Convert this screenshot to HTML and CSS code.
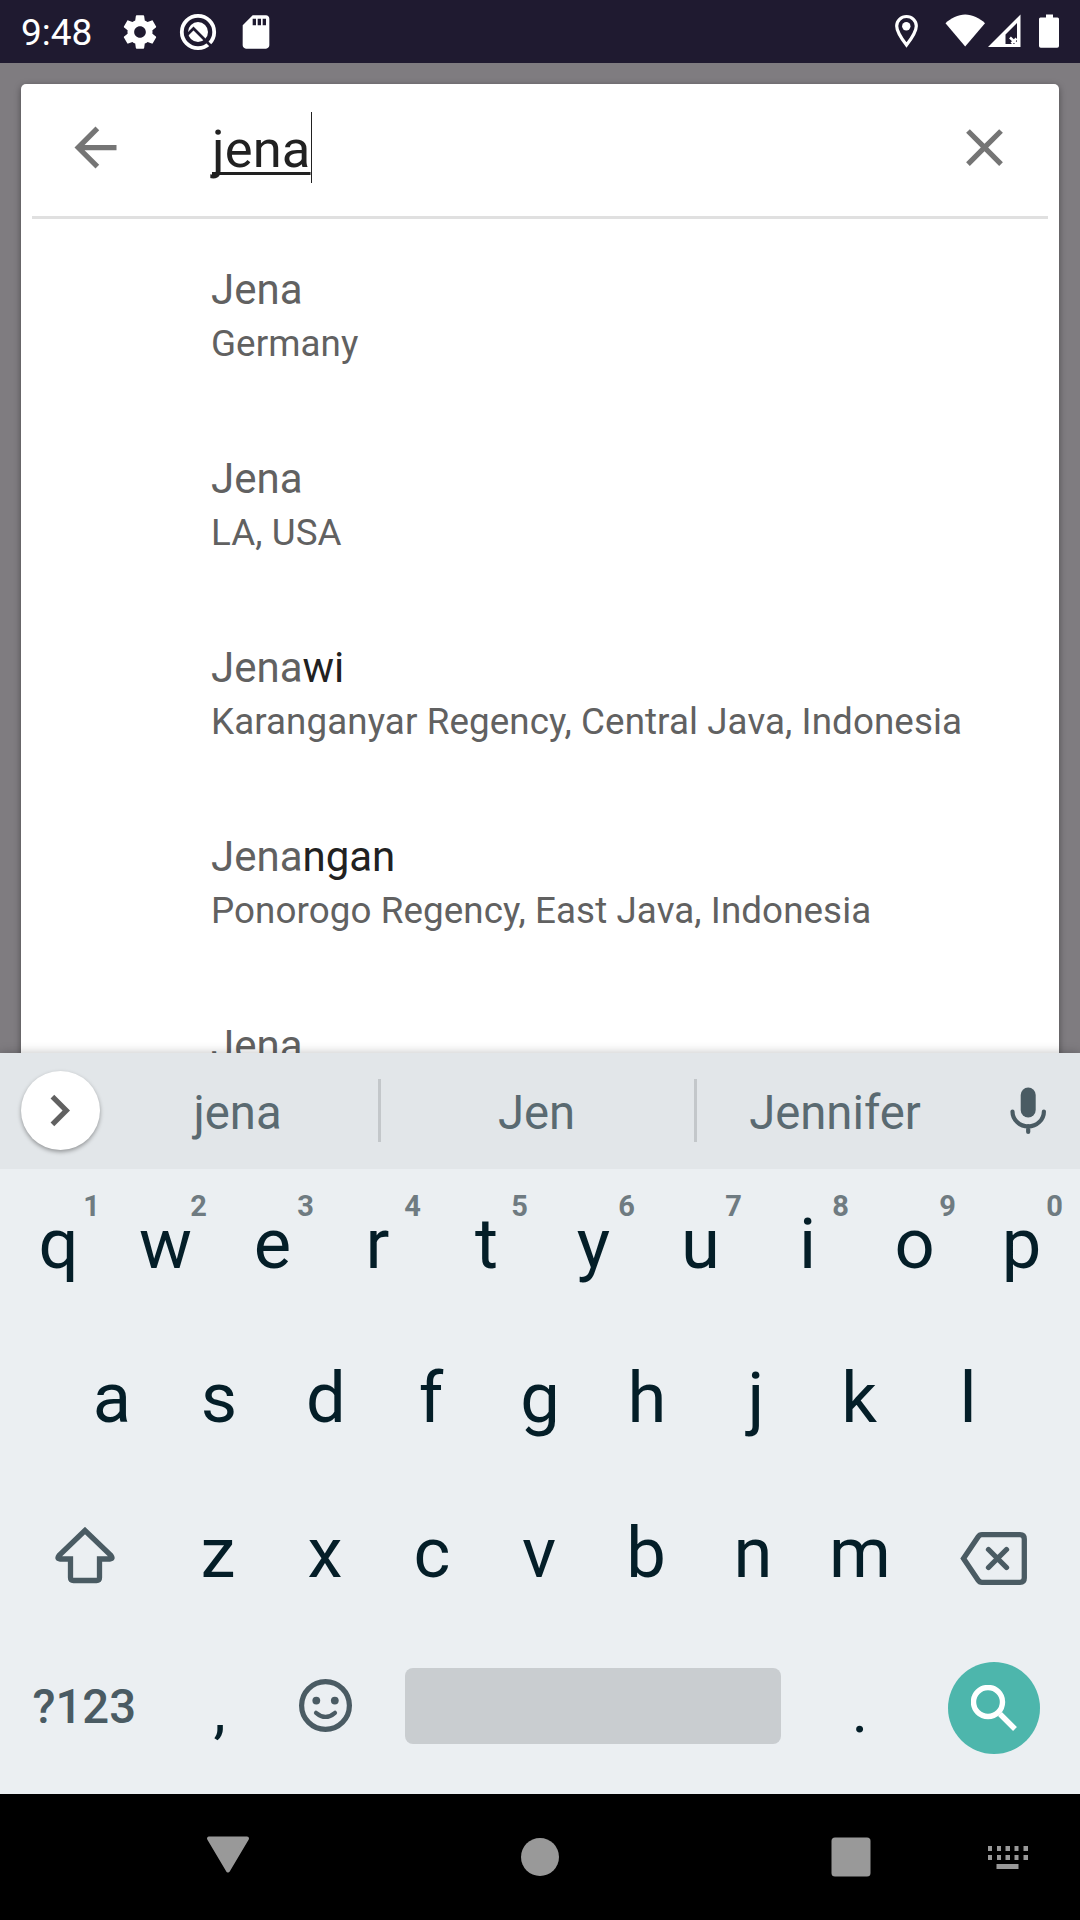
FILE: index.html
```
<!DOCTYPE html>
<html lang="en">
<head>
<meta charset="utf-8">
<title>Place search</title>
<link rel="stylesheet" href="styles.css">
</head>
<body>
<div class="screen">
  <header class="status">
    <span class="clock">9:48</span>
    <svg class="status-icon gear" viewBox="0 0 24 24"><path d="M19.43 12.98c.04-.32.07-.64.07-.98s-.03-.66-.07-.98l2.11-1.65c.19-.15.24-.42.12-.64l-2-3.46c-.12-.22-.39-.3-.61-.22l-2.49 1c-.52-.4-1.08-.73-1.69-.98l-.38-2.65C14.46 2.18 14.25 2 14 2h-4c-.25 0-.46.18-.49.42l-.38 2.65c-.61.25-1.17.59-1.69.98l-2.49-1c-.23-.09-.49 0-.61.22l-2 3.46c-.13.22-.07.49.12.64l2.11 1.65c-.04.32-.07.65-.07.98s.03.66.07.98l-2.11 1.65c-.19.15-.24.42-.12.64l2 3.46c.12.22.39.3.61.22l2.49-1c.52.4 1.08.73 1.69.98l.38 2.65c.03.24.24.42.49.42h4c.25 0 .46-.18.49-.42l.38-2.65c.61-.25 1.17-.59 1.69-.98l2.49 1c.23.09.49 0 .61-.22l2-3.46c.12-.22.07-.49-.12-.64l-2.11-1.65zM12 15.5c-1.93 0-3.5-1.57-3.5-3.5s1.57-3.5 3.5-3.5 3.5 1.57 3.5 3.5-1.57 3.5-3.5 3.5z"/></svg>
    <svg class="status-icon" viewBox="0 0 40 40"><circle cx="20" cy="20" r="16.2" fill="none" stroke="#fff" stroke-width="3.8"/><circle cx="20" cy="20" r="10"/><path d="M9 23L15.500 16.500L33 34" fill="none" stroke="#1f1a30" stroke-width="2.7"/></svg>
    <svg class="status-icon" viewBox="0 0 24 24"><path d="M18 2h-8L4.020 8 4 20c0 1.100.9 2 2 2h12c1.100 0 2-.9 2-2V4c0-1.100-.9-2-2-2zm-6 6h-2V4h2v4zm3 0h-2V4h2v4zm3 0h-2V4h2v4z"/></svg>
    <svg class="status-right" viewBox="0 0 166 35"><path d="M12.500 2.500c-5.500 0-9.800 4.300-9.800 9.600 0 6.500 9.800 19 9.800 19s9.800-12.500 9.800-19c0-5.300-4.300-9.600-9.800-9.600z" fill="none" stroke="#fff" stroke-width="3.200"/><circle cx="12.300" cy="12.300" r="4.200"/><path d="M71.200 32.500L51.500 9.200C57 4 64 .5 71.200.5S85.500 4 91 9.200z"/><path fill-rule="evenodd" d="M94 33L126.500.5V33zM111.500 20.500V30H123V9z"/><path d="M116 23.500l7 6.500M122.500 24.500l-5 5" fill="none" stroke="#fff" stroke-width="2.600"/><path d="M152 .5h7v3h4.500q1.500 0 1.500 1.500v27q0 1.800-1.800 1.800h-16.400q-1.800 0-1.800-1.800V5q0-1.500 1.500-1.500H152z"/></svg>
  </header>

  <main class="backdrop">
    <section class="card">
      <div class="search">
        <svg class="icon" viewBox="0 0 24 24"><path d="M20 11H7.830l5.590-5.590L12 4l-8 8 8 8 1.410-1.410L7.830 13H20v-2z"/></svg>
        <div class="query"><span class="typed">jena</span></div>
        <svg class="icon" viewBox="0 0 24 24"><path d="M19 6.410L17.590 5 12 10.590 6.410 5 5 6.410 10.590 12 5 17.590 6.410 19 12 13.410 17.590 19 19 17.590 13.410 12z"/></svg>
      </div>
      <ul class="results">
        <li><p class="name">Jena</p><p class="region">Germany</p></li>
        <li><p class="name">Jena</p><p class="region">LA, USA</p></li>
        <li><p class="name">Jena<b>wi</b></p><p class="region">Karanganyar Regency, Central Java, Indonesia</p></li>
        <li><p class="name">Jena<b>ngan</b></p><p class="region">Ponorogo Regency, East Java, Indonesia</p></li>
        <li><p class="name">Jena</p></li>
      </ul>
    </section>
  </main>

  <section class="keyboard">
    <div class="suggestions">
      <div class="expand"><svg viewBox="0 0 24 24"><path d="M10 6L8.590 7.410 13.170 12l-4.580 4.590L10 18l6-6z"/></svg></div>
      <div class="word first"><span>jena</span></div>
      <div class="word second"><span>Jen</span></div>
      <div class="word third"><span>Jennifer</span></div>
      <svg class="mic" viewBox="0 0 36 48"><rect x="10.700" y="0.500" width="15" height="30" rx="7.500"/><path d="M2.500 24.500a15.700 15 0 0 0 31.400 0M18.200 39v6" fill="none" stroke="#4a5b63" stroke-width="4.200" stroke-linecap="round"/></svg>
    </div>
    <div class="keys">
      <div class="row">
        <div class="key">q<sup>1</sup></div><div class="key">w<sup>2</sup></div><div class="key">e<sup>3</sup></div><div class="key narrow">r<sup>4</sup></div><div class="key">t<sup>5</sup></div><div class="key">y<sup>6</sup></div><div class="key">u<sup>7</sup></div><div class="key">i<sup>8</sup></div><div class="key">o<sup>9</sup></div><div class="key">p<sup>0</sup></div>
      </div>
      <div class="row">
        <div class="key">a</div><div class="key">s</div><div class="key">d</div><div class="key narrow">f</div><div class="key">g</div><div class="key">h</div><div class="key hook">j</div><div class="key narrow">k</div><div class="key">l</div>
      </div>
      <div class="row lower">
        <div class="key wide"><svg class="shift" viewBox="0 0 60 57"><path d="M30 3.500L4 28.500Q1.500 32 5 32H15.500V50.500Q15.500 53.500 18.500 53.500H41.500Q44.500 53.500 44.500 50.500V32H55Q58.500 32 56 28.500Z"/></svg></div>
        <div class="key">z</div><div class="key">x</div><div class="key">c</div><div class="key">v</div><div class="key">b</div><div class="key">n</div><div class="key">m</div>
        <div class="key wide"><svg class="delete" viewBox="0 0 67 53"><path d="M22 2.700H60Q64.300 2.700 64.300 7V46Q64.300 50.300 60 50.300H22Q19.500 50.300 18 48L3.500 26.500L18 5Q19.500 2.700 22 2.700Z"/><path d="M28.500 17.500L46.500 35.500M46.500 17.500L28.500 35.500"/></svg></div>
      </div>
      <div class="row lower">
        <div class="key wide mode">?123</div>
        <div class="key mark comma">,</div>
        <div class="key"><svg class="emoji" viewBox="0 0 53 53"><circle class="line" cx="26.500" cy="26.500" r="23.900"/><circle cx="17.300" cy="21.600" r="3.900"/><circle cx="35.800" cy="21.600" r="3.900"/><path class="line mouth" d="M17 33.800Q26.500 42 36 33.800"/></svg></div>
        <div class="key space"><i></i></div>
        <div class="key mark">.</div>
        <div class="key wide"><div class="go"><svg viewBox="0 0 46 46"><circle cx="17" cy="17" r="14.500"/><path d="M29 29L44 44"/></svg></div></div>
      </div>
    </div>
  </section>

  <nav class="nav">
    <svg viewBox="0 0 1080 126"><path d="M209 44.500h38L228 76.500z" stroke="#999" stroke-width="4" stroke-linejoin="round"/><circle cx="540" cy="63" r="19"/><rect x="831.500" y="43.500" width="39" height="39" rx="3.500"/><path d="M988 52h4v5h-4zm9 0h4v5h-4zm8.500 0h4.500v5h-4.500zm9 0h4v5h-4zm9 0h4.500v5h-4.500zM988 61h4v5h-4zm9 0h4v5h-4zm8.500 0h4.500v5h-4.500zm9 0h4v5h-4zm9 0h4.500v5h-4.500zM996.500 70h22v5h-22z"/></svg>
  </nav>
</div>
</body>
</html>
```
FILE: styles.css
```
* { box-sizing: border-box; margin: 0; padding: 0; }
body { width: 1080px; height: 1920px; overflow: hidden; font-family: Roboto, sans-serif; }
svg { display: block; flex: none; }
.screen { display: flex; flex-direction: column; height: 1920px; }

.status { height: 63px; flex: none; background: #1f1a30; color: #fff; fill: #fff; display: flex; align-items: center; padding-left: 21px; }
.clock { font-size: 37px; line-height: 44px; width: 99px; padding-top: 2px; }
.status-icon { width: 40px; height: 40px; margin-right: 18px; }
.status-right { width: 166px; height: 35px; margin-left: 600px; }

.backdrop { height: 990px; flex: none; background: #7f7c80; padding: 21px 21px 0; overflow: hidden; }
.card { background: #fff; height: 1100px; border-radius: 5px; box-shadow: 0 2px 7px rgba(0,0,0,.4); }
.search { height: 135px; margin: 0 11px; border-bottom: 3px solid #e0e0e0; display: flex; align-items: center; padding: 0 32px 5px; }
.icon { width: 63px; height: 63px; fill: #757575; }
.query { flex: 1; padding-left: 85px; height: 71px; display: flex; }
.typed { font-size: 52.5px; letter-spacing: .15px; line-height: 71px; color: #212121; border-right: 1px solid #212121; height: 71px; padding-top: 2px; text-decoration: underline; text-decoration-thickness: 3px; text-underline-offset: 5px; text-decoration-skip-ink: none; }
.results { list-style: none; }
.results li { height: 189px; padding: 45px 0 0 190px; white-space: nowrap; }
.name { font-size: 42px; line-height: 52px; color: #616161; }
.name b { font-weight: 400; color: #212121; }
.region { font-size: 36.75px; letter-spacing: .085px; line-height: 46px; margin-top: 5px; color: #616161; }

.keyboard { height: 741px; flex: none; background: #ebeff2; position: relative; box-shadow: 0 0 10px rgba(0,0,0,.25); }
.suggestions { height: 116px; background: #e2e6e9; display: flex; align-items: center; padding: 0 0 1px 21px; color: #5a6a71; }
.expand { width: 79px; height: 79px; border-radius: 50%; background: #fff; box-shadow: 0 2px 4px rgba(0,0,0,.35); display: flex; align-items: center; justify-content: center; }
.expand svg { width: 63px; height: 63px; fill: #616161; margin: -1px 2px 0 0; }
.word { font-size: 47.25px; line-height: 63px; height: 63px; display: flex; justify-content: center; }
.word span { padding-top: 3px; }
.first { width: 281px; padding-right: 3px; border-right: 3px solid #c3c7ca; }
.second { width: 316px; padding-right: 2px; border-right: 3px solid #c3c7ca; }
.third { width: 277px; padding-right: 1px; }
.mic { width: 36px; height: 48px; margin: 0 0 0 36px; fill: #4a5b63; }

.row { display: flex; justify-content: center; height: 154.5px; }
.lower { padding-right: 2px; }
.key { width: 107px; display: flex; align-items: center; justify-content: center; font-size: 70.5px; line-height: 82px; color: #041e28; padding-bottom: 5px; position: relative; }
.key sup { position: absolute; right: 0; top: 20px; width: 41px; text-align: center; font-size: 29px; line-height: 34px; font-weight: 700; color: #6f7b81; }
.narrow { padding-right: 4px; }
.hook { padding-left: 4px; }
.wide { width: 160.5px; }
.mode { font-size: 47.25px; font-weight: 500; color: #4a5b63; padding-bottom: 6px; }
.mark { font-size: 62px; padding: 2px 0 0; }
.comma { padding-left: 3px; }
.shift { width: 60px; height: 57px; fill: none; stroke: #4a5b63; stroke-width: 5.3px; margin: 5px 0 0 1px; }
.delete { width: 67px; height: 53px; fill: none; stroke: #4a5b63; stroke-width: 5.3px; stroke-linecap: round; margin: 12px 0 0 -1px; }
.emoji { width: 53px; height: 53px; fill: #4a5b63; margin-top: -4px; }
.line { fill: none; stroke: #4a5b63; stroke-width: 5.2px; }
.mouth { stroke-width: 4.2px; stroke-linecap: round; }
.space { width: 428px; }
.space i { width: 376px; height: 76px; border-radius: 8px; background: #c9cdd0; margin-top: -3px; }
.go { width: 92px; height: 92px; border-radius: 50%; background: #4db6ac; display: flex; align-items: center; justify-content: center; margin-top: 1px; }
.go svg { width: 46px; height: 46px; fill: none; stroke: #fff; stroke-width: 5.4px; }

.nav { height: 126px; background: #000; fill: #999; }
.nav svg { width: 1080px; height: 126px; }
```
